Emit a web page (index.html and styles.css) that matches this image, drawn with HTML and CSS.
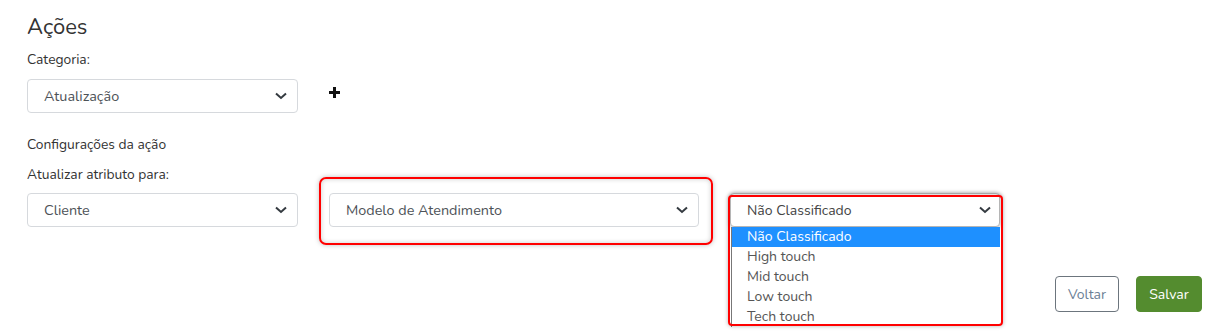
FILE: index.html
```html
<!DOCTYPE html>
<html lang="pt">
<head>
<meta charset="utf-8">
<link rel="stylesheet" href="styles.css">
</head>
<body>
<div class="page">
  <h1 class="title">Ações</h1>
  <div class="label l-cat">Categoria:</div>
  <div class="row r-cat">
    <div class="select">
      <span>Atualização</span>
      <svg class="chev" width="12" height="8" viewBox="0 0 12 8"><path d="M1 1.5 L6 6 L11 1.5" fill="none" stroke="#343a40" stroke-width="2"/></svg>
    </div>
    <svg class="plus" width="11" height="11" viewBox="0 0 11 11"><path d="M4 0h3v4h4v3H7v4H4V7H0V4h4z" fill="#111"/></svg>
  </div>
  <div class="label l-conf">Configurações da ação</div>
  <div class="label l-attr">Atualizar atributo para:</div>
  <div class="row r-attr">
    <div class="select">
      <span>Cliente</span>
      <svg class="chev" width="12" height="8" viewBox="0 0 12 8"><path d="M1 1.5 L6 6 L11 1.5" fill="none" stroke="#343a40" stroke-width="2"/></svg>
    </div>
    <div class="mark mark-a">
      <div class="select wide">
        <span>Modelo de Atendimento</span>
        <svg class="chev" width="12" height="8" viewBox="0 0 12 8"><path d="M1 1.5 L6 6 L11 1.5" fill="none" stroke="#343a40" stroke-width="2"/></svg>
      </div>
    </div>
    <div class="mark mark-b">
      <div class="select open">
        <span>Não Classificado</span>
        <svg class="chev" width="12" height="8" viewBox="0 0 12 8"><path d="M1 1.5 L6 6 L11 1.5" fill="none" stroke="#343a40" stroke-width="2"/></svg>
      </div>
      <ul class="list">
        <li class="sel">Não Classificado</li>
        <li>High touch</li>
        <li>Mid touch</li>
        <li>Low touch</li>
        <li>Tech touch</li>
      </ul>
    </div>
  </div>
  <div class="actions">
    <button class="btn btn-back">Voltar</button>
    <button class="btn btn-save">Salvar</button>
  </div>
</div>
</body>
</html>
```
FILE: styles.css
```css
* { box-sizing: border-box; }
html, body { margin: 0; padding: 0; background: #fff; }
body {
  font-family: "Nunito", "Noto Sans", "Open Sans", sans-serif;
  color: #333;
  width: 1232px;
  height: 335px;
  overflow: hidden;
}
.page { padding: 14px 30px 0 27px; }
.title {
  margin: 0;
  font-size: 22px;
  line-height: 26px;
  font-weight: 400;
  color: #333;
}
.label { font-size: 13.8px; line-height: 18px; color: #333; }
.l-cat { margin-top: 11px; }
.l-conf { margin-top: 23px; }
.l-attr { margin-top: 12px; }
.row { display: flex; align-items: center; }
.r-cat { margin-top: 10px; }
.r-attr { margin-top: 9px; }
.select {
  width: 271px;
  height: 34px;
  border: 1px solid #d6d9dd;
  border-radius: 4px;
  background: #fff;
  display: flex;
  align-items: center;
  justify-content: space-between;
  padding: 0 10px 0 16px;
  font-size: 14.4px;
  color: #4d5257;
}
.select.wide { width: 370px; }
.chev { display: block; }
.plus { margin-left: 31px; margin-top: -8px; }
.mark { position: relative; }
.mark::after {
  content: "";
  position: absolute;
  border: 2px solid #f00;
  pointer-events: none;
}
.mark-a { margin-left: 31px; }
.mark-a::after {
  top: -16px; left: -10px; right: -14px; bottom: -18px;
  border-radius: 7px;
  box-shadow: 0 0 5px rgba(0,0,0,0.25), inset 0 0 5px rgba(0,0,0,0.2);
}
.mark-b { margin-left: 31px; }
.mark-b::after {
  top: 2px; left: -2px; right: -3px; bottom: -99px;
  border-radius: 4px;
  box-shadow: 0 0 4px rgba(0,0,0,0.3);
}
.select.open {
  width: 270px;
  border: 1px solid #b5b5b5;
  box-shadow: 0 0 4px rgba(0,0,0,0.35);
  padding: 0 8px 0 16px;
  font-size: 14px;
  color: #444;
}
.list {
  position: absolute;
  top: 34px;
  left: 1px;
  width: 269px;
  margin: 0;
  padding: 0;
  list-style: none;
  background: #fff;
  border-left: 1px solid #777;
  font-size: 14px;
  color: #555;
}
.list li { height: 20px; line-height: 20px; padding-left: 15px; }
.list li.sel { background: #1e90ff; color: #fff; }
.actions {
  display: flex;
  justify-content: flex-end;
  gap: 17px;
  margin-top: 49px;
}
.btn {
  font-family: inherit;
  font-size: 14px;
  height: 36px;
  border-radius: 4px;
  padding: 0;
  cursor: pointer;
}
.btn-back {
  width: 64px;
  background: #fff;
  border: 1px solid #6c757d;
  color: #6c7f96;
}
.btn-save {
  width: 66px;
  background: #548c2f;
  border: 1px solid #548c2f;
  color: #fff;
}
```
